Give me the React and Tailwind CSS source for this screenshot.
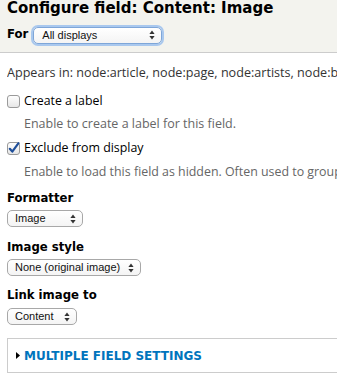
import React from 'react';

const bold = { fontFamily: '"DejaVu Sans", "Open Sans", sans-serif' };
const body = { fontFamily: '"Open Sans", "DejaVu Sans", sans-serif' };

const Arrows = () => (
  <svg width="6" height="10" viewBox="0 0 6 10" className="absolute right-[6px] top-1/2 -translate-y-1/2">
    <path d="M3 0.5 L5.6 4 H0.4 Z" fill="#333" />
    <path d="M3 9.5 L5.6 6 H0.4 Z" fill="#333" />
  </svg>
);

const Select = ({ value, width, focused }) => (
  <div
    className={`relative flex items-center h-[17px] rounded-[5px] bg-gradient-to-b from-white to-[#f4f4f4] ${
      focused
        ? 'border border-[#7ea6d8] shadow-[0_0_0_2px_#a9c8ee]'
        : 'border border-[#a8a8a8]'
    }`}
    style={{ width }}
  >
    <span className={`text-[11px] leading-none text-[#111] font-['Liberation_Sans',Arial,sans-serif] ${focused ? 'pl-[8px]' : 'pl-[7px]'}`}>
      {value}
    </span>
    <Arrows />
  </div>
);

const Checkbox = ({ checked }) => (
  <svg width="13" height="13" viewBox="0 0 13 13" className="shrink-0">
    <defs>
      <linearGradient id="cbg" x1="0" y1="0" x2="0" y2="1">
        <stop offset="0" stopColor="#ffffff" />
        <stop offset="1" stopColor="#e6e6e6" />
      </linearGradient>
    </defs>
    <rect x="0.5" y="0.5" width="12" height="12" rx="2.5" fill="url(#cbg)" stroke="#9a9a9a" />
    {checked && (
      <path d="M2.8 6.8 L5.3 9.6 L11.5 1.2" fill="none" stroke="#1f4f9a" strokeWidth="2.2" strokeLinecap="round" strokeLinejoin="round" />
    )}
  </svg>
);

export default function App() {
  return (
    <div className="w-[337px] h-[373px] overflow-hidden bg-white text-[#222]" style={body}>
      {/* Header */}
      <div className="h-[53px] bg-[#f3f3ee] border-b border-[#cccccc] pl-[7px]" style={bold}>
        <h1 className="text-[15px] leading-4 font-bold text-black whitespace-nowrap">
          Configure field: Content: Image
        </h1>
        <div className="flex items-center mt-[10px] h-[18px]">
          <span className="text-[11.7px] font-bold text-black mr-[5px]">For</span>
          <Select value="All displays" width={129} focused />
        </div>
      </div>

      <div className="pl-[7px]">
        <p className="mt-[12px] text-[12.6px] leading-4 text-[#333] whitespace-nowrap overflow-hidden">
          Appears in: node:article, node:page, node:artists, node:blog
        </p>

        <label className="mt-[12px] flex items-center gap-[4px] h-4 text-[12.3px] text-black">
          <Checkbox />
          Create a label
        </label>
        <p className="mt-[7px] pl-[17px] text-[12.5px] leading-4 text-[#666] whitespace-nowrap overflow-hidden">
          Enable to create a label for this field.
        </p>

        <label className="mt-[8px] flex items-center gap-[4px] h-4 text-[12.4px] text-black">
          <Checkbox checked />
          Exclude from display
        </label>
        <p className="mt-[8px] pl-[17px] text-[12.4px] leading-4 text-[#666] whitespace-nowrap overflow-hidden">
          Enable to load this field as hidden. Often used to group fields.
        </p>

        <div style={bold}>
          <div className="mt-[10px] text-[11.7px] leading-4 font-bold text-black">Formatter</div>
          <div className="mt-[4px]">
            <Select value="Image" width={76} />
          </div>

          <div className="mt-[12px] text-[11.7px] leading-4 font-bold text-black">Image style</div>
          <div className="mt-[4px]">
            <Select value="None (original image)" width={134} />
          </div>

          <div className="mt-[11px] text-[11.7px] leading-4 font-bold text-black">Link image to</div>
          <div className="mt-[5px]">
            <Select value="Content" width={70} />
          </div>

          <div className="mt-[13px] h-[35px] border border-[#cccccc] border-r-0 flex items-center pl-[8px] w-[340px]">
            <svg width="4" height="7" viewBox="0 0 4 7" className="mr-[4px]">
              <path d="M0 0 L4 3.5 L0 7 Z" fill="#000" />
            </svg>
            <span className="text-[12px] font-bold uppercase text-[#0074bd] whitespace-nowrap">
              Multiple field settings
            </span>
          </div>
        </div>
      </div>
    </div>
  );
}
